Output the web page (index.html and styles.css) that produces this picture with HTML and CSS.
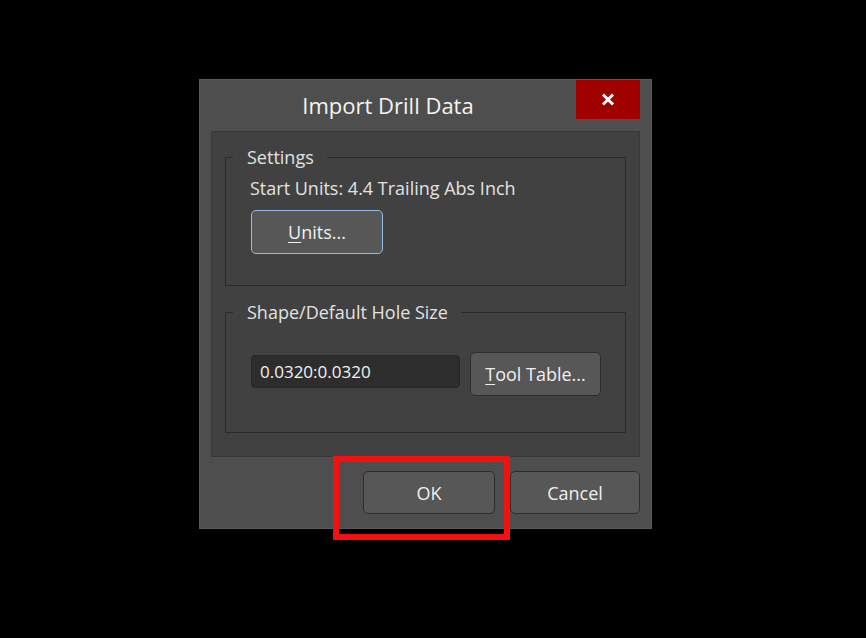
FILE: index.html
```html
<!DOCTYPE html>
<html lang="en">
<head>
  <meta charset="UTF-8">
  <title>Import Drill Data</title>
  <link rel="stylesheet" href="styles.css">
</head>
<body>

<div class="dialog">
  <div class="titlebar">
    <div class="title">Import Drill Data</div>
    <button class="close-btn" title="Close">
      <svg width="14" height="13" viewBox="0 0 14 13">
        <path d="M2 1.5 L12 11.5 M12 1.5 L2 11.5" stroke="#fff" stroke-width="3" fill="none"/>
      </svg>
    </button>
  </div>

  <div class="panel">
    <fieldset class="group group-settings">
      <legend>Settings</legend>
      <div class="info">Start Units: 4.4 Trailing Abs Inch</div>
      <button class="btn btn-focus"><u>U</u>nits...</button>
    </fieldset>

    <fieldset class="group group-shape">
      <legend>Shape/Default Hole Size</legend>
      <div class="row">
        <input type="text" class="field" value="0.0320:0.0320">
        <button class="btn btn-tool"><u>T</u>ool Table...</button>
      </div>
    </fieldset>
  </div>

  <div class="footer">
    <div class="mark">
      <button class="btn btn-ok">OK</button>
      <div class="highlight"></div>
    </div>
    <button class="btn btn-cancel">Cancel</button>
  </div>
</div>

</body>
</html>
```

FILE: styles.css
```css
body {
  box-sizing: border-box;
  min-height: 100vh;
  margin: 0;
  padding: 79px 0 0 199px;
  background: #000;
  font-family: 'Open Sans', 'Noto Sans', sans-serif;
  color: #e2e2e2;
}
.dialog {
  box-sizing: border-box;
  width: 453px;
  height: 450px;
  background: #4e4e4e;
  border: 1px solid #5a5a5a;
}
.titlebar {
  display: flex;
  height: 51px;
}
.title {
  flex: 1;
  text-align: center;
  line-height: 51px;
  font-size: 22px;
  color: #f4f4f4;
}
.close-btn {
  width: 64px;
  height: 39px;
  margin-right: 11px;
  padding: 0;
  border: none;
  background: #a00000;
  display: flex;
  align-items: center;
  justify-content: center;
}
.panel {
  box-sizing: border-box;
  height: 326px;
  margin: 0 11px;
  padding: 0 13px;
  background: #414141;
  border: 1px solid #393939;
}
.group {
  margin: 15px 0 0;
  padding: 0 0 0 24px;
  border: 1px solid #2b2b2b;
}
.group legend {
  margin-left: -17px;
  padding: 0 13px 0 14px;
  font-size: 18px;
  line-height: 20px;
}
.group-settings {
  padding-bottom: 31px;
}
.group-shape {
  margin-top: 16px;
  padding-bottom: 36px;
}
.info {
  margin-top: 10px;
  font-size: 18px;
  line-height: 22px;
}
.btn {
  box-sizing: border-box;
  height: 43px;
  padding: 0;
  font-family: inherit;
  font-size: 18px;
  color: #efefef;
  background: #575757;
  border: 1px solid #2d2d2d;
  border-radius: 5px;
}
.btn u {
  text-underline-offset: 3px;
}
.btn-focus {
  display: block;
  width: 132px;
  height: 44px;
  margin: 11px 0 0 1px;
  border-color: #93bde6;
}
.row {
  display: flex;
  align-items: flex-start;
  gap: 10px;
  padding: 30px 0 0 1px;
}
.field {
  box-sizing: border-box;
  width: 209px;
  height: 33px;
  margin-top: 3px;
  padding: 0 8px;
  font-family: inherit;
  font-size: 17px;
  color: #f2f2f2;
  background: #2d2d2d;
  border: 1px solid #272727;
  border-radius: 4px;
  outline: none;
}
.btn-tool {
  width: 131px;
  height: 44px;
}
.footer {
  display: flex;
  justify-content: flex-end;
  gap: 15px;
  padding: 14px 11px 0 0;
}
.mark {
  position: relative;
}
.btn-ok {
  display: block;
  width: 132px;
}
.btn-cancel {
  width: 130px;
}
/* red call-out frame around the OK button */
.highlight {
  position: absolute;
  box-sizing: border-box;
  left: -30px;
  top: -15px;
  width: 177px;
  height: 84px;
  border: 6px solid #f21010;
  pointer-events: none;
}
```
